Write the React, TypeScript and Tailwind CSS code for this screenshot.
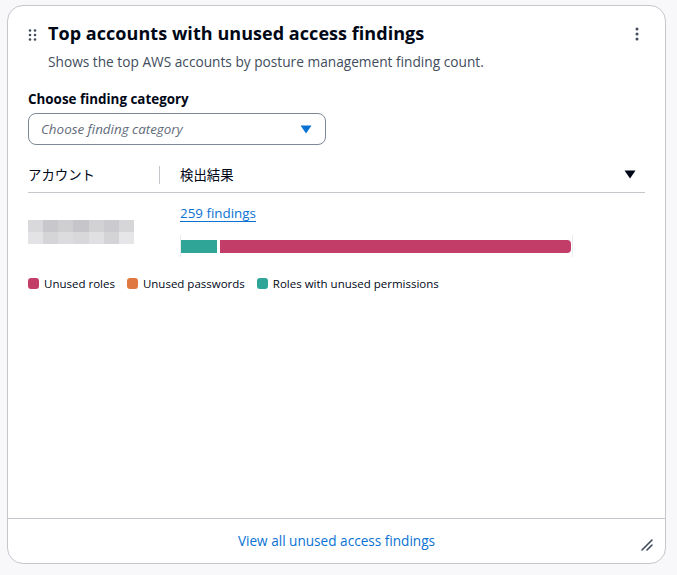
import type { JSX } from "react";

const FONT = { fontFamily: '"Open Sans", "Noto Sans CJK JP", sans-serif' };

const MOSAIC = [
  ["#d9d9dc", "#c8c8cc", "#cfcfd2", "#c6c6ca", "#d2d2d5", "#cbcbcf", "#d6d6d9"],
  ["#e3e3e6", "#d5d5d8", "#dcdcdf", "#d8d8db", "#e0e0e3", "#d4d4d7", "#e6e6e8"],
];

const DragHandle = (): JSX.Element => (
  <svg width="10" height="12" viewBox="0 0 10 12" aria-hidden="true">
    {[1, 5.5, 10].map((y) =>
      [2, 7].map((x) => <circle key={`${x}-${y}`} cx={x} cy={y + 0.5} r="1.3" fill="#414d5c" />)
    )}
  </svg>
);

const Kebab = (): JSX.Element => (
  <svg width="4" height="14" viewBox="0 0 4 14" aria-hidden="true">
    {[2, 7, 12].map((y) => (
      <circle key={y} cx="2" cy={y} r="1.5" fill="#414d5c" />
    ))}
  </svg>
);

const Caret = ({ color }: { color: string }): JSX.Element => (
  <svg width="12" height="9" viewBox="0 0 12 9" aria-hidden="true">
    <path d="M0.5 0.5h11L6 8.5z" fill={color} />
  </svg>
);

const ResizeHandle = (): JSX.Element => (
  <svg width="12" height="12" viewBox="0 0 12 12" aria-hidden="true">
    <path d="M1 11L11 1M6 11l5-5" stroke="#414d5c" strokeWidth="1.6" strokeLinecap="round" />
  </svg>
);

const Legend = ({ color, label }: { color: string; label: string }): JSX.Element => (
  <div className="flex items-center gap-[5px]">
    <span className="h-[11px] w-[11px] rounded-[3px]" style={{ backgroundColor: color }} />
    <span>{label}</span>
  </div>
);

export default function App(): JSX.Element {
  return (
    <div className="h-[575px] w-[677px] bg-[#f8f8fa] pl-[7px] pr-[11px] pt-[5px] pb-[11px] text-[#000716]" style={FONT}>
      <div className="flex h-full flex-col rounded-[16px] border border-[#c6c6cd] bg-white">
        <div className="flex-1 px-[20px] pt-[16px]">
          <div className="flex items-start">
            <div className="mr-[10px] mt-[7px]">
              <DragHandle />
            </div>
            <div className="flex-1">
              <h2 className="text-[18px] font-bold leading-[22px] tracking-[0.05px]">
                Top accounts with unused access findings
              </h2>
              <p className="mt-[9px] text-[13.7px] leading-[18px] text-[#414d5c]">
                Shows the top AWS accounts by posture management finding count.
              </p>
            </div>
            <div className="mr-[6px] mt-[5px]">
              <Kebab />
            </div>
          </div>

          <div className="mt-[19px] text-[13.4px] font-bold leading-[18px]">Choose finding category</div>
          <div className="mt-[5px] flex h-[32px] w-[298px] items-center justify-between rounded-[8px] border border-[#7d8998] pl-[12px] pr-[13px]">
            <span className="text-[13.4px] italic text-[#5f6b7a]">Choose finding category</span>
            <Caret color="#0972d3" />
          </div>

          <div className="mt-[13px] flex h-[35px] items-center border-b border-[#c6c6cd] text-[13.4px]">
            <div className="flex h-[18px] w-[132px] items-center border-r border-[#c6c6cd]">アカウント</div>
            <div className="flex flex-1 items-center justify-between pl-[20px] pr-[9px]">
              <span>検出結果</span>
              <Caret color="#000716" />
            </div>
          </div>

          <div className="flex pt-[11px]">
            <div className="w-[152px] pt-[16px]">
              <div className="grid w-[106px] grid-cols-7">
                {MOSAIC.flat().map((c, i) => (
                  <div key={i} className="h-[12px]" style={{ backgroundColor: c }} />
                ))}
              </div>
            </div>
            <div className="flex flex-col">
              <a className="text-[13.4px] leading-[18px] text-[#0972d3] underline underline-offset-[3px]">259 findings</a>
              <div className="mt-[13px] flex h-[22px] w-[393px] items-center border-x border-[#e9ebed]">
                <div className="flex h-[13px] w-full gap-[3px]">
                  <div className="w-[36px] bg-[#2ea597]" />
                  <div className="w-[351px] rounded-r-[4px] bg-[#c33d69]" />
                </div>
              </div>
            </div>
          </div>

          <div className="mt-[18px] flex items-center gap-[12px] text-[11.5px] text-[#000716]">
            <Legend color="#c33d69" label="Unused roles" />
            <Legend color="#e07941" label="Unused passwords" />
            <Legend color="#2ea597" label="Roles with unused permissions" />
          </div>
        </div>

        <div className="relative flex h-[45px] items-center justify-center border-t border-[#c6c6cd]">
          <a className="text-[13.6px] text-[#0972d3]">View all unused access findings</a>
          <div className="absolute bottom-[12px] right-[12px]">
            <ResizeHandle />
          </div>
        </div>
      </div>
    </div>
  );
}
